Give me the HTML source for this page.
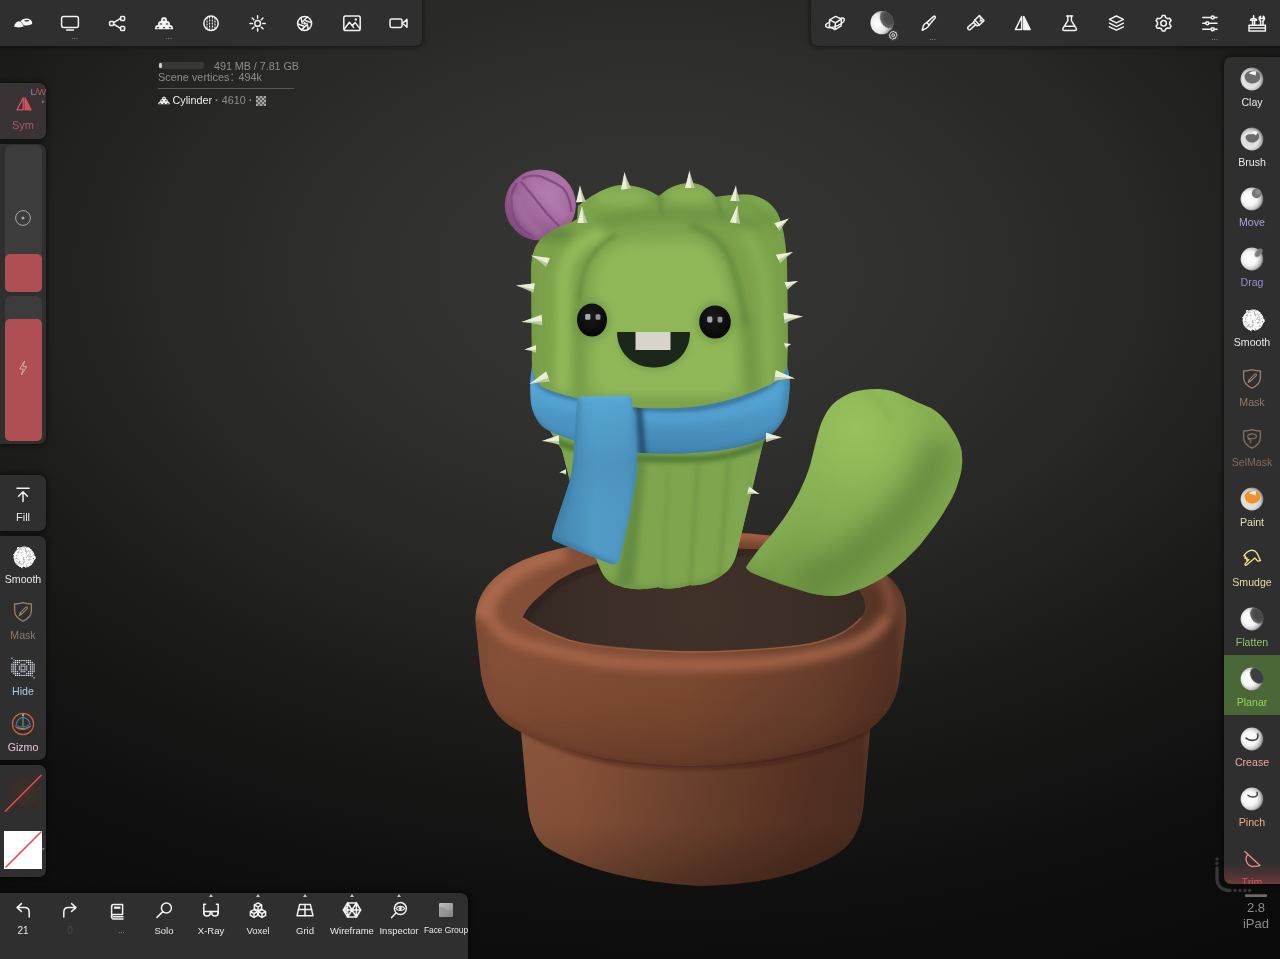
<!DOCTYPE html>
<html lang="en">
<head>
<meta charset="utf-8">
<title>Nomad Sculpt</title>
<style>
*{box-sizing:border-box;margin:0;padding:0}
html,body{width:1280px;height:959px;overflow:hidden;background:#1c1c1c}
body{position:relative;will-change:transform;font-family:"Liberation Sans","DejaVu Sans",sans-serif;color:#e8e8e8;font-size:11px}
#scene{position:absolute;left:0;top:0;width:1280px;height:959px;display:block}
.panel{position:absolute;background:#302f30;box-shadow:0 0 5px 1px rgba(0,0,0,.55)}
.tl{left:0;top:0;width:421.5px;height:46.4px;border-radius:0 0 7px 0}
.tr{left:811px;top:0;width:469px;height:46.4px;border-radius:0 0 0 7px}
.bb{left:0;top:893px;width:468px;height:66px;border-radius:0 8px 0 0}
.rs{left:1224px;top:57px;width:56px;height:827px;border-radius:7px 0 0 7px;overflow:hidden}
.lp{left:0;width:46px;border-radius:0 7px 7px 0}
.ic{position:absolute;width:47px;height:46px;top:0}
.ic svg{position:absolute;left:50%;top:50%;transform:translate(-50%,-50%);overflow:visible}
.dots{position:absolute;left:0;width:100%;text-align:center;font-size:7px;line-height:7px;letter-spacing:.3px;color:#9a9a9a}
.lbl{position:absolute;left:-10px;right:-10px;text-align:center;font-size:11px;line-height:13px;white-space:nowrap}
.tool{position:absolute;left:0;width:100%;height:60px}
.tool svg{position:absolute;left:27.8px;top:23.5px;transform:translate(-50%,-50%);overflow:visible}
.tool .lbl{top:41px;font-size:10.6px}
.ltool{position:absolute;left:0;width:46px;height:56px}
.ltool svg{position:absolute;left:23.3px;top:20.3px;transform:translate(-50%,-50%);overflow:visible}
.ltool .lbl{top:37.5px;font-size:10.6px}
.bi{position:absolute;top:0;width:47px;height:66px}
.bi svg{position:absolute;left:50%;top:17px;transform:translate(-50%,-50%);overflow:visible}
.bi .lbl{top:31px;font-size:9.5px}
.tri{position:absolute;left:50%;top:1px;margin-left:-2.5px;width:0;height:0;border-left:2.5px solid transparent;border-right:2.5px solid transparent;border-bottom:3px solid #c8c8c8}
svg .s{fill:none;stroke:#f2f2f2;stroke-width:1.5;stroke-linecap:round;stroke-linejoin:round}
</style>
</head>
<body>
<svg id="scene" viewBox="0 0 1280 959" width="1280" height="959">
<defs>
<radialGradient id="bg" gradientUnits="userSpaceOnUse" cx="650" cy="270" r="1300" gradientTransform="translate(0 97.2) scale(1 .64)">
<stop offset="0" stop-color="#363634"/><stop offset=".19" stop-color="#31312f"/><stop offset=".385" stop-color="#272726"/><stop offset=".577" stop-color="#191918"/><stop offset=".77" stop-color="#0f0f0f"/><stop offset="1" stop-color="#090909"/>
</radialGradient>
<filter id="b2" filterUnits="userSpaceOnUse" x="400" y="120" width="620" height="800"><feGaussianBlur stdDeviation="2"/></filter>
<filter id="b3" filterUnits="userSpaceOnUse" x="400" y="120" width="620" height="800"><feGaussianBlur stdDeviation="3"/></filter>
<filter id="b5" filterUnits="userSpaceOnUse" x="400" y="120" width="620" height="800"><feGaussianBlur stdDeviation="5"/></filter>
<filter id="b8" filterUnits="userSpaceOnUse" x="400" y="120" width="620" height="800"><feGaussianBlur stdDeviation="8"/></filter>
<filter id="b12" filterUnits="userSpaceOnUse" x="400" y="120" width="620" height="800"><feGaussianBlur stdDeviation="12"/></filter>
<filter id="b20" filterUnits="userSpaceOnUse" x="400" y="120" width="620" height="800"><feGaussianBlur stdDeviation="20"/></filter>
<filter id="b05" filterUnits="userSpaceOnUse" x="400" y="120" width="620" height="800"><feGaussianBlur stdDeviation=".45"/></filter>
<filter id="b1" filterUnits="userSpaceOnUse" x="400" y="120" width="620" height="800"><feGaussianBlur stdDeviation=".7"/></filter>
<filter id="gainPot" filterUnits="userSpaceOnUse" x="400" y="120" width="620" height="800" color-interpolation-filters="sRGB"><feComponentTransfer><feFuncR type="linear" slope="1.13"/><feFuncG type="linear" slope="1.06"/><feFuncB type="linear" slope="1.02"/></feComponentTransfer></filter>
<filter id="gain" filterUnits="userSpaceOnUse" x="400" y="120" width="620" height="800" color-interpolation-filters="sRGB"><feComponentTransfer><feFuncR type="linear" slope="1.07"/><feFuncG type="linear" slope="1.07"/><feFuncB type="linear" slope="1.07"/></feComponentTransfer></filter>
</defs>
<rect width="1280" height="959" fill="url(#bg)"/>
<defs>
<!-- POT -->
<linearGradient id="potH" gradientUnits="userSpaceOnUse" x1="520" y1="0" x2="872" y2="0">
<stop offset="0" stop-color="#79503b"/><stop offset=".15" stop-color="#7a4e39"/><stop offset=".5" stop-color="#603e2d"/><stop offset=".82" stop-color="#4c2f22"/><stop offset=".97" stop-color="#452b20"/><stop offset="1" stop-color="#54362a"/>
</linearGradient>
<linearGradient id="potV" gradientUnits="userSpaceOnUse" x1="0" y1="730" x2="0" y2="886">
<stop offset="0" stop-color="#000" stop-opacity=".0"/><stop offset=".6" stop-color="#000" stop-opacity=".05"/><stop offset="1" stop-color="#000" stop-opacity=".28"/>
</linearGradient>
<linearGradient id="rimH" gradientUnits="userSpaceOnUse" x1="474" y1="0" x2="907" y2="0">
<stop offset="0" stop-color="#6f4633"/><stop offset=".06" stop-color="#774b36"/><stop offset=".5" stop-color="#704631"/><stop offset=".8" stop-color="#5d3b2b"/><stop offset=".97" stop-color="#4a2e22"/><stop offset="1" stop-color="#5e3d2e"/>
</linearGradient>
<linearGradient id="rimV" gradientUnits="userSpaceOnUse" x1="0" y1="660" x2="0" y2="766">
<stop offset="0" stop-color="#000" stop-opacity="0"/><stop offset=".5" stop-color="#000" stop-opacity=".07"/><stop offset="1" stop-color="#000" stop-opacity=".2"/>
</linearGradient>
<radialGradient id="soilG" gradientUnits="userSpaceOnUse" cx="700" cy="610" r="190">
<stop offset="0" stop-color="#393029"/><stop offset=".6" stop-color="#352c27"/><stop offset="1" stop-color="#2c2521"/>
</radialGradient>
<clipPath id="cpPot"><path id="pPot" d="M520,720 L528,809 Q532,836 546,847 Q600,880 700,886 Q792,884 840,852 Q862,836 864,800 L871,720 Z"/></clipPath>
<clipPath id="cpRim"><path id="pRim" d="M475.500,622 C474,590 500,566 540,554 C600,536 680,530 740,533 C800,536 860,552 890,578 C905,592 907,608 906,625 L899,682 C895,704 886,716 870,729 C840,746 770,765 690,766 C610,765 540,745 510,726 C494,714 486,700 481,675 Z"/></clipPath>
<clipPath id="cpSoil"><path id="pSoil" d="M522.500,617.500 C527,608 533,602 540,596 C546,590 552,585 557.500,581 C564,577 570,574 576,571 C590,565 612,559 640,555 C680,549.500 720,548 750,549 C790,550.500 830,562 850,580 C860,590 866.500,600 865,609 C864,613 862,616 860,618 C853,626 848,630 841,633 C830,638 820,641 810,643 C790,646.500 775,648 760,649 C740,650.500 710,651.500 690,651 C670,651 650,650.500 630,649 C615,648 605,647 595,645.500 C585,644 577,642 570,640 C560,637 552,634 545,630.500 C535,626 527,622 522.500,617.500 Z"/></clipPath>
</defs>
<g id="pot" filter="url(#gainPot)">
<use href="#pPot" fill="url(#potH)"/>
<use href="#pPot" fill="url(#potV)"/>
<g clip-path="url(#cpPot)">
<path d="M500,712 Q540,745 610,760 Q690,771 775,759 Q850,744 885,716" fill="none" stroke="#2e190f" stroke-opacity=".55" stroke-width="7" filter="url(#b2)"/>
</g>
<use href="#pRim" fill="url(#rimH)"/>
<use href="#pRim" fill="url(#rimV)"/>
<g clip-path="url(#cpRim)">
<!-- torus top highlight: front arc -->
<path d="M481,618 C486,600 496,586 512,574 C530,562 548,556 566,551" fill="none" stroke="#9a654c" stroke-opacity=".9" stroke-width="18" filter="url(#b5)"/>
<path d="M486,606 C490,622 498,632 507,637 C520,644 532,646 545,649 C560,653 578,657 595,660 C625,664 660,665 690,665 C720,665 750,664 780,661 C810,657 835,651 850,646 C868,640 880,630 888,616" fill="none" stroke="#98644b" stroke-opacity=".9" stroke-width="11" filter="url(#b5)"/>
<path d="M860,560 C880,570 894,590 890,616" fill="none" stroke="#80543f" stroke-opacity=".7" stroke-width="12" filter="url(#b5)"/>
<!-- back rim top (lit) -->
<path d="M600,540 C680,530 760,530 830,548" fill="none" stroke="#9a5c42" stroke-opacity=".8" stroke-width="12" filter="url(#b3)"/>
<!-- bottom edge darkening -->
<path d="M490,718 Q540,754 610,770 Q690,780 775,768 Q850,752 885,724" fill="none" stroke="#3a2015" stroke-opacity=".45" stroke-width="12" filter="url(#b5)"/>
</g>
<!-- soil -->
<use href="#pSoil" fill="url(#soilG)"/>
<g clip-path="url(#cpSoil)">
<path d="M522,617 C527,608 540,594 557,581 C570,573 600,560 640,555 C700,547 760,548 790,553" fill="none" stroke="#1f1815" stroke-opacity=".55" stroke-width="8" filter="url(#b3)"/>
</g>
<!-- thin light lip along front inner edge -->
<path d="M523,618 C535,627 552,634.500 570,640.500 C590,646 630,650 690,652 C740,652 790,647.500 810,644 C835,639 852,628 861,618" fill="none" stroke="#a06a50" stroke-opacity=".55" stroke-width="1.600" filter="url(#b1)"/>
</g>
<defs>
<clipPath id="cpBody"><path id="pBody" d="M531,272 C531,256 534,247 540,240 C548,232 560,226 572,222 L577,219 L578,206 C588,198 605,186 622,185 C640,185 652,192 659,196 C668,188 678,183 690,183 C702,183 710,190 716,197 C726,195 740,194 752,195 C765,198 773,205 778,214 C784,228 786,245 787,262 L788,340 L787,372 C785,400 775,425 763,443 L752,490 L738,548 C735,562 730,570 722,575 C712,583 700,586 690,585 C680,588 668,590 658,587 C645,590 630,590 620,586 C610,584 604,578 600,568 L580,520 L562,450 C545,425 534,400 532,372 Z"/></clipPath>
<radialGradient id="eyeG" cx=".45" cy=".35" r=".65"><stop offset="0" stop-color="#1a1a1a"/><stop offset="1" stop-color="#070707"/></radialGradient>
<radialGradient id="flG" gradientUnits="userSpaceOnUse" cx="552" cy="192" r="56">
<stop offset="0" stop-color="#b27bae"/><stop offset=".5" stop-color="#a4699e"/><stop offset="1" stop-color="#7d4679"/>
</radialGradient>
<clipPath id="cpFl"><circle cx="540.300" cy="205" r="35.600"/></clipPath>
</defs>
<!-- flower -->
<g id="flower">
<circle cx="540.300" cy="205" r="35.600" fill="url(#flG)"/>
<g clip-path="url(#cpFl)" fill="none" stroke="#7c437a" stroke-opacity=".8" stroke-width="2.400" filter="url(#b1)">
<path d="M521,181.500 C530,192 540,205 546,212.500 C551,218 555,222 559,226"/>
<path d="M522,179 C530,174 540,175 546,178.700 C554,182 560,186 563,188 C568,194 570.500,202 571.500,212"/>
<path d="M517,183.400 C512,190 511,197 511.500,200 C511.500,206 512,210 512.500,212.500 C514,220 518,225 521,227.500 C525,232 529,234 534,237"/>
</g>
<g clip-path="url(#cpFl)" fill="none" stroke="#b985b4" stroke-opacity=".45" stroke-width="7" filter="url(#b3)">
<path d="M530,180 C542,190 554,204 566,218"/>
<path d="M516,196 C518,212 528,226 542,236"/>
</g>
</g>
<g id="cactus">
<use href="#pBody" fill="#7ca24a"/>
<g clip-path="url(#cpBody)">
<!-- back lobes -->
<ellipse cx="622" cy="197" rx="28" ry="9" fill="#8ab255" filter="url(#b5)"/>
<ellipse cx="690" cy="195" rx="24" ry="9" fill="#8ab255" filter="url(#b5)"/>
<ellipse cx="752" cy="206" rx="20" ry="8" fill="#84ac50" filter="url(#b5)"/>
<path d="M659,194 L662,216 M716,195 L722,218" fill="none" stroke="#5a853a" stroke-width="4" stroke-opacity=".7" filter="url(#b2)"/>
<path d="M730,205 C750,202 768,212 778,232" fill="none" stroke="#6a9341" stroke-width="10" stroke-opacity=".7" filter="url(#b5)"/>
<!-- valley -->
<path d="M596,224 C620,216 660,214 700,215 C725,216 745,220 762,226" fill="none" stroke="#678f40" stroke-width="11" stroke-opacity=".7" filter="url(#b5)"/>
<!-- face -->
<path d="M592,300 C590,262 602,245 630,241 L690,239 C712,241 724,262 730,292 L740,340 L742,392 L588,392 Z" fill="#90b759" filter="url(#b8)"/>
<path d="M604,300 C603,270 612,254 634,251 L688,250 C706,252 715,270 720,296 L729,340 L730,392 L602,392 Z" fill="#90b759" filter="url(#b5)"/>
<!-- left lobe highlight + arch -->
<path d="M563,392 L564,278 C565,256 578,241 604,233" fill="none" stroke="#93bb5b" stroke-width="15" stroke-opacity=".95" filter="url(#b5)"/>
<!-- right lobe highlight -->
<path d="M769,392 L766,300 C765,275 760,252 744,233" fill="none" stroke="#88b053" stroke-width="11" stroke-opacity=".9" filter="url(#b5)"/>
<!-- creases -->
<path d="M580,392 L579,292" fill="none" stroke="#6b9443" stroke-width="7" stroke-opacity=".55" filter="url(#b5)"/>
<path d="M616,235 C601,243 591,255 586,267 C582,277 580,287 579,300" fill="none" stroke="#58833a" stroke-width="3.200" stroke-opacity=".8" filter="url(#b2)"/>
<path d="M752,392 L749,345 L745,315" fill="none" stroke="#648d3f" stroke-width="9" stroke-opacity=".65" filter="url(#b5)"/>
<path d="M690,226 C703,229 716,236 725,250 C731,260 735,272 738,285 C741,297 744,310 746,325" fill="none" stroke="#55803a" stroke-width="5" stroke-opacity=".8" filter="url(#b3)"/>
<!-- edges -->
<path d="M529,262 L529,392" fill="none" stroke="#6a9341" stroke-width="9" stroke-opacity=".6" filter="url(#b5)"/>
<path d="M791,215 L791,392" fill="none" stroke="#678f3f" stroke-width="9" stroke-opacity=".65" filter="url(#b5)"/>
<!-- flower shadow -->
<ellipse cx="554" cy="234" rx="20" ry="8" fill="#557f38" fill-opacity=".6" filter="url(#b5)"/>
<!-- eye AO -->
<ellipse cx="592" cy="320" rx="19" ry="21" fill="#6a9342" fill-opacity=".55" filter="url(#b3)"/>
<ellipse cx="715" cy="322" rx="20" ry="21" fill="#6a9342" fill-opacity=".55" filter="url(#b3)"/>
<path d="M617,336 L690,336 C690,356 676,371 654,371 C632,371 617,356 617,336 Z" fill="#6a9342" fill-opacity=".5" filter="url(#b3)"/>
<!-- lower body -->
<path d="M540,430 L800,430 L760,600 L580,600 Z" fill="#7fa54e"/>
<path d="M555,441 C590,456 640,461 700,459 C730,457 750,451 768,441" fill="none" stroke="#44702f" stroke-width="7" stroke-opacity=".75" filter="url(#b2)"/>
<path d="M637,455 L646,457 L634,585 L616,585 Z" fill="#5a823c" fill-opacity=".7" filter="url(#b3)"/>
<path d="M698,462 L690,588 M729,456 L719,580" fill="none" stroke="#6c9143" stroke-width="4" stroke-opacity=".7" filter="url(#b2)"/>
<path d="M668,470 L664,590" fill="none" stroke="#729846" stroke-width="4" stroke-opacity=".6" filter="url(#b2)"/>
<path d="M745,460 L730,575" fill="none" stroke="#82a850" stroke-width="7" stroke-opacity=".6" filter="url(#b3)"/>
<path d="M600,580 Q660,602 728,576" fill="none" stroke="#587f39" stroke-width="6" stroke-opacity=".5" filter="url(#b3)"/>
</g>
<!-- eyes -->
<ellipse cx="592" cy="320" rx="15" ry="16.600" fill="url(#eyeG)"/>
<ellipse cx="715" cy="322" rx="15.800" ry="16.600" fill="url(#eyeG)"/>
<g fill="#a4aab2" filter="url(#b1)"><rect x="585.200" y="314" width="5.200" height="5.800" rx="1.400"/><rect x="595.600" y="314.200" width="4.800" height="5.600" rx="1.400" fill-opacity=".85"/><rect x="707.200" y="316.600" width="5.200" height="5.800" rx="1.400"/><rect x="717.600" y="316.800" width="4.800" height="5.600" rx="1.400" fill-opacity=".85"/></g>
<!-- mouth -->
<path d="M617,332 L690,332 C690,352 676,367.500 654,367.500 C632,367.500 617,352 617,332 Z" fill="#1c271b"/>
<rect x="635.500" y="332" width="35" height="18" fill="#d6d4cb"/>
</g>
<defs>
<clipPath id="cpArm"><path id="pArm" d="M746,567 C752,558 758,550 765,542 C776,530 786,516 793,504 C802,488 807,476 811,462 C814,450 816,440 819,430 C822,420 826,412 832,405 C838,399 845,395 853,392 C861,390 868,389 876,389 C886,389 894,391 902,395 C912,400 922,404 931,408 C941,414 948,422 953,431 C959,441 962,448 962,456 C963,466 961,474 958,483 C955,494 950,502 944,512 C938,522 930,532 920,545 C911,555 901,564 890,573 C879,581 867,587 855,591 C848,594 841,596 835,596 C823,596 811,594 800,590 C787,586 774,582 762,577 C754,574 747,571 746,567 Z"/></clipPath>
<radialGradient id="armG" gradientUnits="userSpaceOnUse" cx="856" cy="428" r="175">
<stop offset="0" stop-color="#98c25d"/><stop offset=".3" stop-color="#8db657"/><stop offset=".65" stop-color="#80a84e"/><stop offset="1" stop-color="#769d48"/>
</radialGradient>
<clipPath id="cpRing"><path id="pRing" d="M532,366 C533,376 536,382 542,387 C560,396 600,404 640,408 C665,409 685,408 700,406 C725,402 750,394 770,385 C780,380 785,374 787,366 C790,375 790,385 789,396 C788,408 787,414 783,420 C778,430 770,436 762,440 C745,447 720,451 700,452.500 C680,454 660,454 640,453 C615,451 590,446 572,440 C555,434 545,430 540,424 C534,416 531,408 530.500,398 C530,388 530,376 532,366 Z"/></clipPath>
<linearGradient id="ringG" gradientUnits="userSpaceOnUse" x1="0" y1="366" x2="0" y2="454">
<stop offset="0" stop-color="#4b95c3"/><stop offset=".4" stop-color="#4a92be"/><stop offset=".75" stop-color="#4587b2"/><stop offset="1" stop-color="#3c7ca6"/>
</linearGradient>
<clipPath id="cpTail"><path id="pTail" d="M577,402 C577,398 579,396.500 583,396.500 L626,395.500 C630,395.500 632,397 632,401 C633,420 636,440 637,455 C638,470 635,485 632.500,500 C629,520 624,540 620,558 C619,563 616,565.500 611,564 C592,557 573,549 556,541.500 C552,540 551.500,538 552.500,534 C558,515 565,497 570,480 C574,462 575,440 575.500,420 Z"/></clipPath>
<linearGradient id="tailV" gradientUnits="userSpaceOnUse" x1="0" y1="396" x2="0" y2="565"><stop offset="0" stop-color="#58a8d6" stop-opacity=".55"/><stop offset=".2" stop-color="#4f9bc8" stop-opacity=".25"/><stop offset=".4" stop-color="#3f7da5" stop-opacity=".25"/><stop offset=".7" stop-color="#4a90bb" stop-opacity=".2"/><stop offset="1" stop-color="#4a90bb" stop-opacity=".1"/></linearGradient>
<linearGradient id="tailG" gradientUnits="userSpaceOnUse" x1="565" y1="0" x2="640" y2="0">
<stop offset="0" stop-color="#437fa5"/><stop offset=".4" stop-color="#4c91ba"/><stop offset=".8" stop-color="#4b8eb7"/><stop offset="1" stop-color="#4585ac"/>
</linearGradient>
</defs>
<g id="scarf" filter="url(#gain)">
<use href="#pRing" fill="url(#ringG)"/>
<g clip-path="url(#cpRing)">
<path d="M528,378 C534,394 545,398 560,402 C600,414 650,419 700,416 C740,412 770,400 792,382" fill="none" stroke="#55a0cf" stroke-width="10" stroke-opacity=".6" filter="url(#b5)"/>
<path d="M528,414 C540,434 555,440 572,446 C600,454 650,460 700,458 C740,454 775,444 792,414" fill="none" stroke="#2f5f80" stroke-width="8" stroke-opacity=".8" filter="url(#b3)"/>
<path d="M534,366 C536,380 540,386 548,390 C580,402 640,412 700,408 C740,402 775,388 787,366" fill="none" stroke="#2d5b7a" stroke-width="4" stroke-opacity=".85" filter="url(#b2)"/>
<path d="M638,398 L643,456" fill="none" stroke="#1f425a" stroke-width="7" stroke-opacity=".85" filter="url(#b2)"/>
<path d="M790,370 L786,425" fill="none" stroke="#376f94" stroke-width="8" stroke-opacity=".7" filter="url(#b3)"/>
</g>
<use href="#pTail" fill="url(#tailG)"/>
<use href="#pTail" fill="url(#tailV)"/>
<g clip-path="url(#cpTail)">
<path d="M577,396 L574,440 C572,470 566,500 552,540" fill="none" stroke="#356d91" stroke-width="6" stroke-opacity=".7" filter="url(#b3)"/>
<path d="M633,396 C637,440 641,470 633,505 L621,562" fill="none" stroke="#3a7498" stroke-width="4" stroke-opacity=".6" filter="url(#b2)"/>
<path d="M552,539 L616,567" fill="none" stroke="#336a8e" stroke-width="6" stroke-opacity=".7" filter="url(#b2)"/>
<path d="M580,397 L628,396" fill="none" stroke="#5aa2cd" stroke-width="5" stroke-opacity=".7" filter="url(#b2)"/>
</g>
</g>
<g id="arm">
<use href="#pArm" fill="url(#armG)"/>
<g clip-path="url(#cpArm)">
<path d="M940,440 C935,480 900,520 860,552 C840,568 815,580 795,585" fill="none" stroke="#5c8038" stroke-width="34" stroke-opacity=".7" filter="url(#b12)"/>
<path d="M744,570 C770,586 800,596 836,601" fill="none" stroke="#648a3c" stroke-width="8" stroke-opacity=".6" filter="url(#b5)"/>
<path d="M812,470 C800,505 775,535 750,565" fill="none" stroke="#8ab355" stroke-width="14" stroke-opacity=".6" filter="url(#b8)"/>
<path d="M866,392 C880,398 888,410 890,422 M905,396 C925,408 940,425 945,445" fill="none" stroke="#7ea64c" stroke-width="4" stroke-opacity=".6" filter="url(#b3)"/>
</g>
</g>
<g id="spikes" filter="url(#b05)">
<path d="M631.0,188.6 Q627.1,180.3 624.5,172.0 Q623.4,180.7 621.0,189.4 Z" fill="#bcc7a4"/>
<path d="M621.0,189.4 L624.5,172.0 L627.2,188.9 Z" fill="#e9efd9"/>
<path d="M695.0,187.9 Q691.6,179.2 689.5,170.5 Q687.9,179.3 685.0,188.1 Z" fill="#bcc7a4"/>
<path d="M685.0,188.1 L689.5,170.5 L691.2,188.0 Z" fill="#e9efd9"/>
<path d="M739.8,201.3 Q737.3,193.4 736.0,185.5 Q733.7,193.1 730.2,200.7 Z" fill="#bcc7a4"/>
<path d="M730.2,200.7 L736.0,185.5 L736.2,201.1 Z" fill="#e9efd9"/>
<path d="M585.8,201.7 Q582.3,193.6 580.0,185.5 Q578.7,193.9 576.2,202.3 Z" fill="#bcc7a4"/>
<path d="M576.2,202.3 L580.0,185.5 L582.2,201.9 Z" fill="#e9efd9"/>
<path d="M587.5,222.9 Q584.1,214.4 582.0,206.0 Q580.4,214.6 577.5,223.1 Z" fill="#bcc7a4"/>
<path d="M577.5,223.1 L582.0,206.0 L583.7,223.0 Z" fill="#e9efd9"/>
<path d="M740.0,223.7 Q738.1,214.3 737.5,205.0 Q734.4,213.7 730.0,222.3 Z" fill="#bcc7a4"/>
<path d="M730.0,222.3 L737.5,205.0 L736.2,223.2 Z" fill="#e9efd9"/>
<path d="M779.6,230.7 Q784.0,224.1 789.0,218.5 Q782.0,221.4 774.4,223.3 Z" fill="#bcc7a4"/>
<path d="M774.4,223.3 L789.0,218.5 L777.7,227.9 Z" fill="#e9efd9"/>
<path d="M780.0,263.3 Q786.3,257.1 793.0,252.0 Q784.7,253.9 776.0,254.7 Z" fill="#bcc7a4"/>
<path d="M776.0,254.7 L793.0,252.0 L778.5,260.1 Z" fill="#e9efd9"/>
<path d="M787.5,289.7 Q792.5,284.8 798.0,281.0 Q791.5,282.2 784.5,282.3 Z" fill="#bcc7a4"/>
<path d="M784.5,282.3 L798.0,281.0 L786.4,286.9 Z" fill="#e9efd9"/>
<path d="M784.4,323.2 Q793.7,319.2 803.0,316.5 Q793.3,315.3 783.6,312.8 Z" fill="#bcc7a4"/>
<path d="M783.6,312.8 L803.0,316.5 L784.1,319.3 Z" fill="#e9efd9"/>
<path d="M785.9,348.8 Q788.3,345.9 791.0,344.0 Q787.7,344.1 784.1,343.2 Z" fill="#bcc7a4"/>
<path d="M784.1,343.2 L791.0,344.0 L785.2,346.7 Z" fill="#e9efd9"/>
<path d="M774.2,380.8 Q784.7,379.1 795.0,378.5 Q785.3,374.9 775.8,370.2 Z" fill="#bcc7a4"/>
<path d="M775.8,370.2 L795.0,378.5 L774.8,376.8 Z" fill="#e9efd9"/>
<path d="M549.8,258.1 Q540.2,257.3 531.0,255.5 Q538.8,260.7 546.2,266.9 Z" fill="#bcc7a4"/>
<path d="M549.8,258.1 L531.0,255.5 L547.5,263.6 Z" fill="#e9efd9"/>
<path d="M534.7,283.2 Q525.2,285.0 516.0,285.5 Q524.8,288.5 533.3,292.8 Z" fill="#bcc7a4"/>
<path d="M534.7,283.2 L516.0,285.5 L533.8,289.2 Z" fill="#e9efd9"/>
<path d="M541.5,314.8 Q531.6,319.0 521.5,322.0 Q531.9,323.0 542.5,325.2 Z" fill="#bcc7a4"/>
<path d="M541.5,314.8 L521.5,322.0 L542.1,321.3 Z" fill="#e9efd9"/>
<path d="M535.8,345.2 Q530.2,348.0 524.5,349.5 Q530.3,350.5 536.2,352.8 Z" fill="#bcc7a4"/>
<path d="M535.8,345.2 L524.5,349.5 L536.0,349.9 Z" fill="#e9efd9"/>
<path d="M546.0,371.5 Q538.0,378.3 529.5,384.0 Q539.5,382.2 550.0,381.5 Z" fill="#bcc7a4"/>
<path d="M546.0,371.5 L529.5,384.0 L548.5,377.8 Z" fill="#e9efd9"/>
<path d="M558.7,435.2 Q550.4,438.7 542.0,441.0 Q550.6,442.3 559.3,444.8 Z" fill="#bcc7a4"/>
<path d="M558.7,435.2 L542.0,441.0 L559.1,441.2 Z" fill="#e9efd9"/>
<path d="M565.8,469.2 Q562.7,471.5 559.5,472.5 Q562.8,473.0 566.2,474.8 Z" fill="#bcc7a4"/>
<path d="M565.8,469.2 L559.5,472.5 L566.1,472.7 Z" fill="#e9efd9"/>
<path d="M766.0,442.3 Q774.0,439.3 782.0,437.5 Q774.0,435.7 766.0,432.7 Z" fill="#bcc7a4"/>
<path d="M766.0,432.7 L782.0,437.5 L766.0,438.7 Z" fill="#e9efd9"/>
<path d="M746.8,494.3 Q753.3,493.6 759.5,494.0 Q754.2,490.9 749.2,486.7 Z" fill="#bcc7a4"/>
<path d="M749.2,486.7 L759.5,494.0 L747.7,491.5 Z" fill="#e9efd9"/>
</g>

</svg>

<div class="panel tl">
<div class="ic" style="left:-0.5px"><svg width="30" height="30" viewBox="-15 -15 30 30"><path d="M-9,3.600 C-8.300,.4 -6.300,-1.800 -4.300,-1.800 C-2,-1.800 -.2,1 .6,3.600 C-2,4.700 -7,4.700 -9,3.600 Z" fill="#f4f4f4"/><path d="M-2.600,-1.600 C-1.600,-3.600 1,-4.600 3.600,-4.600 C6.600,-4.600 9,-2.800 9.300,-.2 C9.300,1.600 6,2.500 3,2.500 C2,2.500 1.200,2.400 .6,2.200 C0,.6 -1.200,-.9 -2.600,-1.600 Z" fill="#f4f4f4"/><ellipse cx="3.800" cy="-2.300" rx="2.600" ry=".8" fill="#302f30"/></svg></div>
<div class="ic" style="left:46.5px"><svg width="30" height="30" viewBox="-15 -15 30 30"><rect class="s" x="-8.400" y="-6.600" width="16.800" height="11.200" rx="2"/><path class="s" d="M-3.400,7 H3.400"/></svg><div class="dots" style="top:33px;left:5px;color:#c0c0c0">...</div></div>
<div class="ic" style="left:93.5px"><svg width="30" height="30" viewBox="-15 -15 30 30"><rect class="s" x="-7.400" y="-1.600" width="4" height="4" rx=".8"/><rect class="s" x="3.600" y="-6.600" width="4" height="4" rx=".8"/><rect class="s" x="3.600" y="3.400" width="4" height="4" rx=".8"/><path class="s" d="M-3.400,-.4 L3.600,-4.600 M-3.400,1.200 L3.600,5.400"/></svg></div>
<div class="ic" style="left:140.5px"><svg width="30" height="30" viewBox="-15 -15 30 30"><path d="M-9.200,6.300 L-8.600,3.600 Q-8.200,2.300 -6.800,2.300 L-6.200,2.300 L-5.600,-.4 Q-5.200,-1.700 -3.800,-1.700 L-3.200,-1.700 L-2.600,-4.400 Q-2.200,-5.700 -.8,-5.700 L.8,-5.700 Q2.200,-5.700 2.600,-4.400 L3.200,-1.700 L3.800,-1.700 Q5.200,-1.700 5.600,-.4 L6.200,2.300 L6.800,2.300 Q8.200,2.300 8.600,3.600 L9.200,6.300 Z" fill="#f4f4f4"/><g fill="#302f30"><path d="M-1.400,-2.600 Q-1.200,-3.800 0,-3.800 Q1.200,-3.800 1.400,-2.600 Z"/><path d="M-4.400,1.400 Q-4.200,.2 -3,.2 Q-1.800,.2 -1.600,1.400 Z"/><path d="M1.600,1.400 Q1.800,.2 3,.2 Q4.200,.2 4.400,1.400 Z"/><path d="M-7.400,5.200 Q-7.200,4 -6,4 Q-4.800,4 -4.600,5.200 Z"/><path d="M-1.400,5.200 Q-1.200,4 0,4 Q1.200,4 1.400,5.200 Z"/><path d="M4.600,5.200 Q4.800,4 6,4 Q7.200,4 7.400,5.200 Z"/></g></svg><div class="dots" style="top:33px;left:5px;color:#c0c0c0">...</div></div>
<div class="ic" style="left:187.5px"><svg width="30" height="30" viewBox="-15 -15 30 30"><circle class="s" cx="0" cy=".3" r="7.200"/><g stroke="#f2f2f2" stroke-width="1.100" fill="none" stroke-dasharray="2 1"><path d="M-4,-5.400 V6 M-1.400,-6.600 V7.200 M1.400,-6.600 V7.200 M4,-5.400 V6"/></g></svg></div>
<div class="ic" style="left:234.5px"><svg width="30" height="30" viewBox="-15 -15 30 30"><circle class="s" cx="-.4" cy=".4" r="2.900"/><path class="s" d="M-.4,-4.800 V-7.200 M-.4,5.600 V8 M-5.600,.4 H-8 M4.800,.4 H7.200 M-4.100,-3.300 L-5.800,-5 M3.300,-3.300 L5,-5 M-4.100,4.100 L-5.800,5.800 M3.300,4.100 L5,5.800" stroke-width="1.400"/></svg></div>
<div class="ic" style="left:281.5px"><svg width="30" height="30" viewBox="-15 -15 30 30"><circle class="s" cx="-.4" cy=".4" r="7"/><g class="s" stroke-width="1.300"><path d="M-1.800,-1.800 L2.400,-6.200 M.8,-2.200 L6.400,-.4 M2,.6 L3.200,6.200 M1,2.600 L-3.400,6.600 M-1.600,3 L-7.200,1 M-2.800,.2 L-4,-5.400"/></g><circle cx="-.4" cy=".4" r="1.300" fill="#f2f2f2"/></svg></div>
<div class="ic" style="left:328.5px"><svg width="30" height="30" viewBox="-15 -15 30 30"><rect class="s" x="-8.200" y="-7" width="16.400" height="14.600" rx="1.800"/><path class="s" d="M-7.600,6 L-2.600,-.8 L1.600,4.400 M.2,2.600 L3.200,-.4 L7.800,5.400" stroke-width="1.400"/><circle cx="3.800" cy="-3.600" r="1.200" fill="#f2f2f2"/></svg></div>
<div class="ic" style="left:375.5px"><svg width="30" height="30" viewBox="-15 -15 30 30"><rect class="s" x="-9" y="-4" width="12" height="8.400" rx="1.600"/><path class="s" d="M3.600,.2 L8,-3.600 V4.200 Z" stroke-width="1.300"/></svg></div>
</div>

<div class="panel tr">
<div class="ic" style="left:0.5px"><svg width="30" height="30" viewBox="-15 -15 30 30"><g class="s" stroke-width="1.300"><path d="M-5.400,-3.200 L.6,-6.600 L6.400,-4 L6.200,2.800 L0,6.600 L-5.600,3.600 Z"/><path d="M-5.400,-3.200 L.4,-.2 L6.400,-4 M.4,-.2 L0,6.600"/><path d="M-5.800,-.6 C-9.400,.8 -10.200,2.600 -8.600,3.800 C-6.400,5.200 -1.400,4.400 3.200,2.400 C7.800,.2 10.200,-2.600 9.200,-4.200 C8.600,-5 7.400,-5.200 6.400,-5"/></g></svg></div>
<div class="ic" style="left:47.500px"><svg width="34" height="34" viewBox="-17 -17 34 34"><defs><radialGradient id="mc1" cx=".3" cy=".55" r=".75"><stop offset="0" stop-color="#ffffff"/><stop offset=".55" stop-color="#e6e6e6"/><stop offset=".85" stop-color="#8d8d8d"/><stop offset="1" stop-color="#5a5a5a"/></radialGradient><clipPath id="mcc"><circle cx="0" cy="-.3" r="11.600"/></clipPath><filter id="mcb"><feGaussianBlur stdDeviation=".6"/></filter></defs><circle cx="0" cy="-.3" r="11.600" fill="url(#mc1)"/><g clip-path="url(#mcc)"><ellipse cx="5.200" cy="-3.600" rx="6.600" ry="9.400" transform="rotate(-28 5.200 -3.600)" fill="#5c5c5c" filter="url(#mcb)"/><ellipse cx="6.400" cy="-4.400" rx="4.600" ry="7" transform="rotate(-28 6.400 -4.400)" fill="#4c4c4c" filter="url(#mcb)"/></g><circle cx="11.200" cy="12.200" r="6" fill="#3c3b3c"/><g transform="translate(11.200 12.200)" fill="none" stroke="#e8e8e8" stroke-width="1"><path d="M0,-3.900 L1.300,-3.100 L2.900,-2.700 L3.100,-1.100 L3.700,.3 L2.700,1.600 L2.300,3.100 L.8,3.400 L-.6,3.900 L-1.900,3 L-3.300,2.300 L-3.300,.8 L-3.800,-.7 L-2.700,-1.900 L-2,-3.300 L-.5,-3.300 Z" stroke-linejoin="round"/><circle r="1.400"/></g></svg></div>
<div class="ic" style="left:94.500px"><svg width="30" height="30" viewBox="-15 -15 30 30"><g class="s" stroke-width="1.400"><path d="M-6.800,7.200 L-5.600,2.600 C-4.800,1.200 -3.600,.2 -2.200,-.4 L4.600,-6.600 C5.600,-7.400 6.800,-6.200 6.200,-5.200 L.2,2 C-.4,3.400 -1.400,4.600 -2.800,5.400 Z"/><path d="M-2.200,-.4 L.2,2"/></g></svg><div class="dots" style="top:33.500px;left:4px;color:#c0c0c0">...</div></div>
<div class="ic" style="left:141.500px"><svg width="30" height="30" viewBox="-15 -15 30 30"><g class="s" stroke-width="1.400"><path d="M-1.200,-3 L3.400,-7.400 L8,-2.400 L3.400,2 Z"/><path d="M-1.200,-3 L-2.400,-.6 L-.4,1.600 M3.400,2 L1.200,2.800 L-.4,1.600"/><path d="M-2.400,-.6 L-7.800,3.800 C-9.400,5.200 -7.400,7.600 -5.600,6.400 L-.4,1.600"/></g><path d="M3.600,-5.400 L5,-3.800 L4.200,-2 L6,-2.600 L6.400,-1" fill="none" stroke="#f2f2f2" stroke-width="1.200"/></svg></div>
<div class="ic" style="left:188.500px"><svg width="30" height="30" viewBox="-15 -15 30 30"><path d="M-1.300,-6.400 V6.600 H-7.600 Z" fill="none" stroke="#f2f2f2" stroke-width="1.500" stroke-linejoin="round"/><path d="M.8,-6.400 V6.600 H7.200 Z" fill="#f2f2f2" stroke="#f2f2f2" stroke-width="1.500" stroke-linejoin="round"/></svg></div>
<div class="ic" style="left:235.500px"><svg width="30" height="30" viewBox="-15 -15 30 30"><g class="s" stroke-width="1.400"><path d="M-3.400,-7 H2.600"/><path d="M-2.200,-7 V-2.400 L-7,5.400 C-7.600,6.600 -7,7.600 -5.800,7.600 H5 C6.200,7.600 6.800,6.600 6.200,5.400 L1.400,-2.400 V-7"/><path d="M-5,3.200 H4.200"/></g></svg></div>
<div class="ic" style="left:282.500px"><svg width="30" height="30" viewBox="-15 -15 30 30"><g class="s" stroke-width="1.400"><path d="M-.6,-7 L6.400,-3.600 L-.6,-.2 L-7.600,-3.600 Z"/><path d="M-7.600,.2 L-.6,3.600 L6.400,.2"/><path d="M-7.600,3.800 L-.6,7.200 L6.400,3.800"/></g></svg></div>
<div class="ic" style="left:329.500px"><svg width="30" height="30" viewBox="-15 -15 30 30"><g class="s" stroke-width="1.500"><path d="M-1.700,-7.500 H.9 L1.700,-5.400 L3.600,-4.300 L5.800,-4.700 L7.100,-2.500 L5.700,-.8 V1.400 L7.100,3.100 L5.800,5.300 L3.600,4.900 L1.700,6 L.9,8.100 H-1.700 L-2.500,6 L-4.400,4.900 L-6.600,5.300 L-7.900,3.100 L-6.500,1.400 V-.8 L-7.900,-2.500 L-6.600,-4.700 L-4.400,-4.300 L-2.500,-5.400 Z"/><circle cx="-.4" cy=".3" r="2.800"/></g></svg></div>
<div class="ic" style="left:376.500px"><svg width="30" height="30" viewBox="-15 -15 30 30"><g class="s" stroke-width="1.400"><path d="M-8.200,-5.500 H.2 M3.200,-5.500 H6 M-8.200,.3 H-5.200 M-2.200,.3 H6 M-8.200,6.300 H.2 M3.200,6.300 H6"/><circle cx="1.700" cy="-5.500" r="1.500"/><circle cx="-3.700" cy=".3" r="1.500"/><circle cx="1.700" cy="6.300" r="1.500"/></g></svg><div class="dots" style="top:33.500px;left:4px;color:#c0c0c0">...</div></div>
<div class="ic" style="left:423.500px"><svg width="30" height="30" viewBox="-15 -15 30 30"><g class="s" stroke-width="1.400"><path d="M-9,2.200 H7.400 V8 H-9 Z M-9,5.100 H7.400"/><path d="M-5.400,2.200 V-2.600 M-3.400,2.200 V-2.600"/><path d="M-7.400,-2.800 C-7.400,-5.200 -1.400,-5.200 -1.400,-2.800 Z"/><path d="M-4.400,-4.600 V-7.200"/><path d="M2.600,2.200 V-2 M5,2.200 V-2"/><path d="M2.600,-2 C.6,-3 .6,-6 2.400,-6.800 V-4.600 H5.200 V-6.800 C7,-6 7,-3 5,-2"/></g></svg></div>
</div>

<div class="panel bb">
<div class="bi" style="left:-.5px"><svg width="30" height="30" viewBox="-15 -15 30 30"><path class="s" d="M-1.600,-6.400 L-6,-2.400 L-1.600,1.400 M-6,-2.400 H1.600 C4.600,-2.400 6.200,-.6 6.200,2.200 V7" stroke-width="1.500"/></svg><div class="lbl" style="font-size:10px">21</div></div>
<div class="bi" style="left:46.500px"><svg width="30" height="30" viewBox="-15 -15 30 30"><path class="s" d="M1.600,-6.400 L6,-2.400 L1.600,1.400 M6,-2.400 H-1.600 C-4.600,-2.400 -6.200,-.6 -6.200,2.200 V7" stroke="#4e4d4e" stroke-width="1.500"/></svg><div class="lbl" style="font-size:10px;color:#4e4d4e">0</div></div>
<div class="bi" style="left:93.500px"><svg width="30" height="30" viewBox="-15 -15 30 30"><g class="s" stroke-width="1.300"><path d="M-5.400,-4 V6.600 C-5.400,8.200 -4.600,9 -3.400,9 H6"/><path d="M-5.400,6.600 C-5.400,5 -4.600,4.400 -3.400,4.400 H5.600 V-5.600 H-3.400 C-4.600,-5.600 -5.400,-5 -5.400,-3.600"/><path d="M-3.400,6.700 H6"/></g><rect x="-3" y="-3.400" width="6.400" height="2.200" fill="#f2f2f2"/></svg><div class="dots" style="top:34px;left:4.500px;color:#bbb">...</div></div>
<div class="bi" style="left:140.500px"><svg width="30" height="30" viewBox="-15 -15 30 30"><circle class="s" cx="2.400" cy="-2" r="5" stroke-width="1.400"/><path class="s" d="M-1.200,1.600 L-7,7.400" stroke-width="1.400"/></svg><div class="lbl">Solo</div></div>
<div class="bi" style="left:187.500px"><div class="tri"></div><svg width="30" height="30" viewBox="-15 -15 30 30"><g class="s" stroke-width="1.400"><path d="M-5.400,-5.800 H-7.200 V3.200 M5.400,-5.800 H7.200 V3.200"/><path d="M-7.200,1.400 H-.8 V3 C-.8,7 -7.200,7 -7.200,3 Z M7.200,1.400 H.8 V3 C.8,7 7.200,7 7.200,3 Z"/><path d="M-.8,1.600 H.8"/></g></svg><div class="lbl">X-Ray</div></div>
<div class="bi" style="left:234.500px"><div class="tri"></div><svg width="30" height="30" viewBox="-15 -15 30 30"><g class="s" stroke-width="1.200"><path d="M-3.600,-5.200 L0,-7.200 L3.600,-5.200 V-1.200 L0,.8 L-3.600,-1.200 Z M-3.600,-5.200 L0,-3.200 L3.600,-5.200 M0,-3.200 V.8"/><path d="M-7.600,1.600 L-4,-.4 L-.4,1.600 V5.400 L-4,7.400 L-7.600,5.400 Z M-7.600,1.600 L-4,3.600 L-.4,1.600 M-4,3.600 V7.400"/><path d="M.4,1.600 L4,-.4 L7.600,1.600 V5.400 L4,7.400 L.4,5.400 Z M.4,1.600 L4,3.600 L7.600,1.600 M4,3.600 V7.400"/></g></svg><div class="lbl">Voxel</div></div>
<div class="bi" style="left:281.500px"><div class="tri"></div><svg width="30" height="30" viewBox="-15 -15 30 30"><g class="s" stroke-width="1.300"><path d="M-5.400,-5.400 H5.400 L8,5.800 H-8 Z"/><path d="M0,-5.400 V5.800 M-6.600,-.6 H6.600"/></g></svg><div class="lbl">Grid</div></div>
<div class="bi" style="left:328.500px"><div class="tri"></div><svg width="30" height="30" viewBox="-15 -15 30 30"><g class="s" stroke-width="1.100"><path d="M-4.400,-7 H4.400 L8.600,0 L4.400,7 H-4.400 L-8.600,0 Z"/><path d="M-8.600,0 H8.600 M-4.400,-7 L0,0 L4.400,-7 M-4.400,7 L0,0 L4.400,7 M-4.400,-7 V7 M4.400,-7 V7 M-8.600,0 L-4.400,-3 M-8.600,0 L-4.400,3"/></g></svg><div class="lbl">Wireframe</div></div>
<div class="bi" style="left:375.500px"><div class="tri"></div><svg width="30" height="30" viewBox="-15 -15 30 30"><g class="s" stroke-width="1.300"><circle cx="1.400" cy="-1.400" r="6"/><path d="M-3,3 L-7.400,7.600"/><path d="M-3,-1.400 C-1,-4.400 3.800,-4.400 5.800,-1.400 C3.800,1.200 -1,1.200 -3,-1.400 Z" stroke-width="1.100"/></g><circle cx="1.400" cy="-1.400" r="1.500" fill="#f2f2f2"/></svg><div class="lbl">Inspector</div></div>
<div class="bi" style="left:422.500px"><svg width="18" height="18" viewBox="-9 -9 18 18"><defs><linearGradient id="fgg" x1="0" y1="0" x2="1" y2="1"><stop offset="0" stop-color="#c2c2c2"/><stop offset=".45" stop-color="#a8a8a8"/><stop offset="1" stop-color="#7e7e7e"/></linearGradient><filter id="fgb"><feGaussianBlur stdDeviation=".5"/></filter></defs><rect x="-7" y="-7" width="14" height="14" rx="1.200" fill="url(#fgg)" filter="url(#fgb)"/><path d="M-7,-3 C-2,-3.600 0,-1 1.600,.4 C3.400,1.600 5.400,1.400 7,1.400 V7 H-7 Z" fill="#8a8a8a" fill-opacity=".55" filter="url(#fgb)"/></svg><div class="lbl" style="font-size:8.400px">Face Group</div></div>
</div>

<div class="panel rs">
<svg width="0" height="0" style="position:absolute"><defs>
<radialGradient id="sph" cx=".4" cy=".48" r=".62"><stop offset="0" stop-color="#fff"/><stop offset=".5" stop-color="#f6f6f6"/><stop offset=".78" stop-color="#c4c4c4"/><stop offset=".93" stop-color="#7a7a7a"/><stop offset="1" stop-color="#4c4c4c"/></radialGradient>
<radialGradient id="sphR" cx=".42" cy=".55" r=".6"><stop offset="0" stop-color="#d0d0d0"/><stop offset=".55" stop-color="#e4e4e4"/><stop offset=".8" stop-color="#bdbdbd"/><stop offset=".95" stop-color="#7c7c7c"/><stop offset="1" stop-color="#555"/></radialGradient>
<radialGradient id="sphP" cx=".42" cy=".55" r=".6"><stop offset="0" stop-color="#e8d8c0"/><stop offset=".55" stop-color="#e6e0d8"/><stop offset=".8" stop-color="#b8c4d0"/><stop offset=".95" stop-color="#7c8088"/><stop offset="1" stop-color="#555"/></radialGradient>
<filter id="sb" x="-20%" y="-20%" width="140%" height="140%"><feGaussianBlur stdDeviation=".45"/></filter>
<filter id="sb2" x="-20%" y="-20%" width="140%" height="140%"><feGaussianBlur stdDeviation=".7"/></filter>
<filter id="rough" x="-20%" y="-20%" width="140%" height="140%"><feTurbulence type="fractalNoise" baseFrequency=".35" numOctaves="2" seed="4" result="n"/><feDisplacementMap in="SourceGraphic" in2="n" scale="3.500"/></filter>
<filter id="speck" x="-20%" y="-20%" width="140%" height="140%"><feTurbulence type="fractalNoise" baseFrequency=".42" numOctaves="2" seed="11" result="n"/><feColorMatrix in="n" type="matrix" values="0 0 0 0 .5  0 0 0 0 .5  0 0 0 0 .5  0 0 0 -7 3.25" result="sp"/><feComposite in="sp" in2="SourceGraphic" operator="in" result="spc"/><feMerge><feMergeNode in="SourceGraphic"/><feMergeNode in="spc"/></feMerge></filter>
<clipPath id="sc"><circle r="11.400"/></clipPath>
</defs></svg>
<div class="tool" style="top:-2px;"><svg width="28" height="28" viewBox="-14 -14 28 28"><circle r="11.400" fill="url(#sphR)" filter="url(#sb)"/><path d="M-7.400,-2 C-7.800,-5.600 -4,-8.400 .6,-8.600 C5.200,-8.600 8.600,-6 8.400,-2 C8,2.200 4,4.600 -.2,4.400 C-4.200,4.200 -7,1.400 -7.400,-2 Z" fill="#6c6c6c" filter="url(#sb2)"/><path d="M-3,-5.600 C-1,-7.800 2,-8 4.200,-7.400 L3.600,-3.400 C1.600,-4.600 -1,-4.800 -3,-5.600 Z" fill="#fff" fill-opacity=".92" filter="url(#sb)"/></svg><div class="lbl" style="color:#e8e8e8">Clay</div></div>
<div class="tool" style="top:58px;"><svg width="28" height="28" viewBox="-14 -14 28 28"><circle r="11.400" fill="url(#sphR)" filter="url(#sb)"/><path d="M-6.400,-1.200 C-7,-4.400 -3,-5.400 0,-4.600 C2,-6.600 6.600,-7.400 7.200,-3.400 C7.600,.8 3.600,4 -.6,3.600 C-4,3.200 -6,1 -6.400,-1.200 Z" fill="#6c6c6c" filter="url(#sb2)"/><path d="M-.4,-6.400 C1.600,-8 4.400,-8 5.600,-6.600 L4,-3.600 C2.600,-4.600 1,-5 -.4,-6.400 Z" fill="#fff" fill-opacity=".92" filter="url(#sb)"/></svg><div class="lbl" style="color:#e8e8e8">Brush</div></div>
<div class="tool" style="top:118px;"><svg width="28" height="28" viewBox="-14 -14 28 28"><circle r="11.400" fill="url(#sph)" filter="url(#sb)"/><circle cx="4.600" cy="-5.600" r="4.800" fill="#777" filter="url(#sb2)"/><circle cx="6" cy="-7" r="2.600" fill="#8a8a8a" filter="url(#sb2)"/></svg><div class="lbl" style="color:#a9a3dc">Move</div></div>
<div class="tool" style="top:178px;"><svg width="28" height="28" viewBox="-14 -14 28 28"><circle r="11.400" fill="url(#sph)" filter="url(#sb)"/><ellipse cx="6.600" cy="-6.200" rx="2.800" ry="5" transform="rotate(40 6.600 -6.200)" fill="#7a7a7a" filter="url(#sb2)"/></svg><div class="lbl" style="color:#9790cc">Drag</div></div>
<div class="tool" style="top:238px;"><svg width="28" height="28" viewBox="-14 -14 28 28"><g filter="url(#sb)"><g filter="url(#speck)"><circle cx="1.200" cy="1.200" r="10.600" fill="#fbfbfb" filter="url(#rough)"/></g></g><g fill="none" stroke="#a8a8a8" stroke-width=".8" filter="url(#sb)" stroke-opacity=".8"><path d="M-7,-5 C-5,-8 -1,-9 2,-8 M5,-6 C8,-3 8,2 6,5 M-8,2 C-7,6 -3,8 1,8 M3,2 L6,-2"/></g></svg><div class="lbl" style="color:#e8e8e8">Smooth</div></div>
<div class="tool" style="top:298px;"><svg width="28" height="28" viewBox="-14 -14 28 28"><g fill="none" stroke="#9a816a" stroke-width="1.300" stroke-linejoin="round" stroke-linecap="round"><path d="M0,-9.400 C-3,-8.400 -5.800,-8 -8.400,-8 V-1.400 C-8.400,3.600 -4.600,7.200 0,9.200 C4.600,7.200 8.400,3.600 8.400,-1.400 V-8 C5.800,-8 3,-8.400 0,-9.400 Z"/><path d="M-3.800,3.600 L-2.800,.8 L2.800,-4.800 C3.800,-5.600 5,-4.400 4.200,-3.400 L-1.400,2.200 Z M-2.800,.8 L-1.400,2.200" stroke-width="1.100"/></g></svg><div class="lbl" style="color:#907a68">Mask</div></div>
<div class="tool" style="top:358px;"><svg width="28" height="28" viewBox="-14 -14 28 28"><g fill="none" stroke="#86715f" stroke-width="1.300" stroke-linejoin="round" stroke-linecap="round"><path d="M0,-9.400 C-3,-8.400 -5.800,-8 -8.400,-8 V-1.400 C-8.400,3.600 -4.600,7.200 0,9.200 C4.600,7.200 8.400,3.600 8.400,-1.400 V-8 C5.800,-8 3,-8.400 0,-9.400 Z"/><path d="M-3.600,-1 C-6,-3.600 -1.600,-5.600 1.600,-5 C5.400,-4.400 5.400,-1 1.600,-.4 C-.4,-.2 -2.400,-.2 -3.600,-1 C-4.400,0 -3,1.200 -1.600,.6 C-.6,1.600 -1,3 -2,3.800" stroke-width="1.100"/></g></svg><div class="lbl" style="color:#7f6c5d">SelMask</div></div>
<div class="tool" style="top:418px;"><svg width="28" height="28" viewBox="-14 -14 28 28"><circle r="11.400" fill="url(#sphP)" filter="url(#sb)"/><path d="M-7.400,-2 C-7.800,-5.600 -4,-8.400 .6,-8.600 C5.200,-8.600 8.600,-6 8.400,-2 C8,2.200 4,4.600 -.2,4.400 C-4.200,4.200 -7,1.400 -7.400,-2 Z" fill="#f0922c" filter="url(#sb2)"/><path d="M-3,-5.600 C-1,-7.800 2,-8 4.200,-7.400 L3.600,-3.600 C1.600,-4.800 -1,-4.800 -3,-5.600 Z" fill="#fff" fill-opacity=".9" filter="url(#sb)"/></svg><div class="lbl" style="color:#e6deb0">Paint</div></div>
<div class="tool" style="top:478px;"><svg width="28" height="28" viewBox="-14 -14 28 28"><path d="M-1.400,-8.600 C.6,-9 3.400,-8 4.600,-6.400 C6.200,-4.200 6.600,-1.600 8.600,1.600 L6,2.200 L2.800,-1 L-5.400,6 C-6.400,6.800 -7.600,5.600 -6.800,4.600 L-3,.6 L-5.400,1.200 L-5,-1 L-7,-.6 L-6.600,-2.800 L-8.200,-3.200 C-6.600,-5.600 -4,-8 -1.400,-8.600 Z" fill="none" stroke="#eee68a" stroke-width="1.300" stroke-linejoin="round"/></svg><div class="lbl" style="color:#e2daa2">Smudge</div></div>
<div class="tool" style="top:538px;"><svg width="28" height="28" viewBox="-14 -14 28 28"><circle r="11.400" fill="url(#sph)" filter="url(#sb)"/><g clip-path="url(#sc)"><ellipse cx="5" cy="-3.400" rx="6.200" ry="8.600" transform="rotate(-32 5 -3.400)" fill="#5a5a5a" filter="url(#sb2)"/><ellipse cx="6" cy="-4.200" rx="4.600" ry="7" transform="rotate(-32 6 -4.200)" fill="#484848" filter="url(#sb2)"/></g></svg><div class="lbl" style="color:#8cc468">Flatten</div></div>
<div class="tool" style="top:598px;background:#4b6637;"><svg width="28" height="28" viewBox="-14 -14 28 28"><circle r="11.400" fill="url(#sph)" filter="url(#sb)"/><g clip-path="url(#sc)"><ellipse cx="5" cy="-3.400" rx="6.200" ry="8.600" transform="rotate(-32 5 -3.400)" fill="#3c3c42" filter="url(#sb2)"/></g></svg><div class="lbl" style="color:#90d45f">Planar</div></div>
<div class="tool" style="top:658px;"><svg width="28" height="28" viewBox="-14 -14 28 28"><circle r="11.400" fill="url(#sph)" filter="url(#sb)"/><path d="M-6,-1 C-3,2 3.600,2.400 5.400,-.6 C6,-1.800 6,-3.600 5.600,-5" fill="none" stroke="#454545" stroke-width="1.700" stroke-linecap="round" filter="url(#sb)"/></svg><div class="lbl" style="color:#e8aa9c">Crease</div></div>
<div class="tool" style="top:718px;"><svg width="28" height="28" viewBox="-14 -14 28 28"><circle r="11.400" fill="url(#sph)" filter="url(#sb)"/><path d="M-4,-3.800 C-1.600,-1.400 3.600,-1.200 5,-3.600 C5.400,-4.600 5.400,-5.800 5,-6.800" fill="none" stroke="#454545" stroke-width="1.500" stroke-linecap="round" filter="url(#sb)"/></svg><div class="lbl" style="color:#e8aa8a">Pinch</div></div>
<div class="tool" style="top:778px;"><svg width="28" height="28" viewBox="-14 -14 28 28"><g fill="none" stroke="#ea8a8a" stroke-width="1.300" stroke-linecap="round"><path d="M-7.200,-7.600 L8,6.400"/><path d="M-4.200,-4.800 C-8.600,1.600 -3.600,8.400 3,7.400 C5,7.200 6.600,6.600 8,6.400"/></g></svg><div class="lbl" style="color:#e27474">Trim</div></div>
<div style="position:absolute;left:0;right:0;bottom:0;height:20px;background:linear-gradient(to bottom,rgba(150,60,60,0),rgba(150,62,62,.4) 75%,rgba(160,70,70,.55))"></div>
</div>
<svg style="position:absolute;left:1205px;top:850px" width="75" height="60" viewBox="1205 850 75 60"><path d="M1217,868 V878 C1217,886 1222,890.500 1230,890.500" fill="none" stroke="#363636" stroke-width="3.400" stroke-linecap="round"/><g fill="#363636"><circle cx="1217" cy="859" r="1.700"/><circle cx="1217" cy="863.500" r="1.700"/><circle cx="1235" cy="890.500" r="1.700"/><circle cx="1240" cy="890.500" r="1.700"/><circle cx="1245" cy="890.500" r="1.700"/><circle cx="1249.500" cy="890.500" r="1.700"/></g><rect x="1245" y="894.200" width="22" height="2.800" rx="1" fill="#6c6c6c"/></svg>
<div style="position:absolute;left:1226px;top:900px;width:60px;text-align:center;font-size:13px;line-height:15.500px;color:#8c8c8c">2.8<br>iPad</div>

<div class="panel lp" style="top:83px;height:56px;background:#3a3335">
<svg style="position:absolute;left:12.800px;top:10.800px" width="22" height="20" viewBox="-11 -10 22 20"><path d="M-.8,-6.200 V5.800 H-7 Z" fill="none" stroke="#cf5662" stroke-width="1.300" stroke-linejoin="round"/><path d="M1,-6.200 V5.800 H7 Z" fill="#d2505e" stroke="#d2505e" stroke-width="1.300" stroke-linejoin="round"/></svg>
<div style="position:absolute;left:30.500px;top:3.500px;font-size:9.500px;line-height:10px;letter-spacing:-.6px;white-space:nowrap"><span style="color:#7f93b4">L</span><span style="color:#b55560">/W</span></div>
<div style="position:absolute;left:42px;top:15px;font-size:5px;line-height:6px;color:#8a8088">&#9656;</div>
<div class="lbl" style="top:36px;color:#a95a63">Sym</div>
</div>
<div class="panel lp" style="top:144px;height:299.500px">
<div style="position:absolute;left:5px;top:1px;width:37px;height:147px;background:#3d3c3d;border-radius:6px 6px 5px 5px"></div>
<div style="position:absolute;left:5px;top:110px;width:37px;height:38px;background:#b04f53;border-radius:5px"></div>
<svg style="position:absolute;left:13px;top:63.500px" width="20" height="20" viewBox="-10 -10 20 20"><circle r="7.400" fill="none" stroke="#a9a9a9" stroke-width="1"/><circle r="1.500" fill="#a9a9a9"/></svg>
<div style="position:absolute;left:5px;top:152px;width:37px;height:145px;background:#3d3c3d;border-radius:6px"></div>
<div style="position:absolute;left:5px;top:175px;width:37px;height:122px;background:#b04f53;border-radius:5px"></div>
<svg style="position:absolute;left:15px;top:214px" width="16" height="20" viewBox="-8 -10 16 20"><path d="M1.600,-7 L-3.400,1 H.2 L-1.600,7 L3.600,-1.400 H0 Z" fill="none" stroke="#eaa6a6" stroke-width=".9" stroke-linejoin="round"/></svg>
</div>
<div class="panel lp" style="top:474.500px;height:56px">
<svg style="position:absolute;left:13px;top:10.500px" width="20" height="20" viewBox="-10 -10 20 20"><path class="s" d="M-6,-6.800 H6 M0,6.600 V-3 M-4.400,1.200 L0,-3.200 L4.400,1.200" stroke-width="1.500"/></svg>
<div class="lbl" style="top:36px">Fill</div>
</div>
<div class="panel lp" style="top:535.500px;height:224px">
<div class="ltool" style="top:0px"><svg width="28" height="28" viewBox="-14 -14 28 28"><g filter="url(#sb)"><g filter="url(#speck)"><circle cx="1.200" cy="1.200" r="10.600" fill="#fbfbfb" filter="url(#rough)"/></g></g><g fill="none" stroke="#a8a8a8" stroke-width=".8" filter="url(#sb)" stroke-opacity=".8"><path d="M-7,-5 C-5,-8 -1,-9 2,-8 M5,-6 C8,-3 8,2 6,5 M-8,2 C-7,6 -3,8 1,8 M3,2 L6,-2"/></g></svg><div class="lbl" style="color:#e8e8e8">Smooth</div></div>
<div class="ltool" style="top:56px"><svg width="28" height="28" viewBox="-14 -14 28 28"><g fill="none" stroke="#9a816a" stroke-width="1.300" stroke-linejoin="round" stroke-linecap="round"><path d="M0,-9.400 C-3,-8.400 -5.800,-8 -8.400,-8 V-1.400 C-8.400,3.600 -4.600,7.200 0,9.200 C4.600,7.200 8.400,3.600 8.400,-1.400 V-8 C5.800,-8 3,-8.400 0,-9.400 Z"/><path d="M-3.800,3.600 L-2.800,.8 L2.800,-4.800 C3.800,-5.600 5,-4.400 4.200,-3.400 L-1.400,2.200 Z M-2.800,.8 L-1.400,2.200" stroke-width="1.100"/></g></svg><div class="lbl" style="color:#907a68">Mask</div></div>
<div class="ltool" style="top:112px"><svg width="28" height="28" viewBox="-14 -14 28 28"><g fill="#dfe8f4"><rect x="-8.00" y="-8.00" width="1.200" height="1.200"/><rect x="-6.15" y="-8.00" width="1.200" height="1.200"/><rect x="-4.30" y="-8.00" width="1.200" height="1.200"/><rect x="-2.45" y="-8.00" width="1.200" height="1.200"/><rect x="-0.60" y="-8.00" width="1.200" height="1.200"/><rect x="1.25" y="-8.00" width="1.200" height="1.200"/><rect x="3.10" y="-8.00" width="1.200" height="1.200"/><rect x="4.95" y="-8.00" width="1.200" height="1.200"/><rect x="6.80" y="-8.00" width="1.200" height="1.200"/><rect x="-9.85" y="-6.15" width="1.200" height="1.200"/><rect x="-8.00" y="-6.15" width="1.200" height="1.200"/><rect x="-6.15" y="-6.15" width="1.200" height="1.200"/><rect x="-4.30" y="-6.15" width="1.200" height="1.200"/><rect x="3.10" y="-6.15" width="1.200" height="1.200"/><rect x="4.95" y="-6.15" width="1.200" height="1.200"/><rect x="6.80" y="-6.15" width="1.200" height="1.200"/><rect x="8.65" y="-6.15" width="1.200" height="1.200"/><rect x="-11.70" y="-4.30" width="1.200" height="1.200"/><rect x="-9.85" y="-4.30" width="1.200" height="1.200"/><rect x="-8.00" y="-4.30" width="1.200" height="1.200"/><rect x="-6.15" y="-4.30" width="1.200" height="1.200"/><rect x="-2.45" y="-4.30" width="1.200" height="1.200"/><rect x="-0.60" y="-4.30" width="1.200" height="1.200"/><rect x="1.25" y="-4.30" width="1.200" height="1.200"/><rect x="4.95" y="-4.30" width="1.200" height="1.200"/><rect x="6.80" y="-4.30" width="1.200" height="1.200"/><rect x="8.65" y="-4.30" width="1.200" height="1.200"/><rect x="10.50" y="-4.30" width="1.200" height="1.200"/><rect x="-11.70" y="-2.45" width="1.200" height="1.200"/><rect x="-9.85" y="-2.45" width="1.200" height="1.200"/><rect x="-8.00" y="-2.45" width="1.200" height="1.200"/><rect x="-4.30" y="-2.45" width="1.200" height="1.200"/><rect x="-2.45" y="-2.45" width="1.200" height="1.200"/><rect x="-0.60" y="-2.45" width="1.200" height="1.200"/><rect x="1.25" y="-2.45" width="1.200" height="1.200"/><rect x="3.10" y="-2.45" width="1.200" height="1.200"/><rect x="6.80" y="-2.45" width="1.200" height="1.200"/><rect x="8.65" y="-2.45" width="1.200" height="1.200"/><rect x="10.50" y="-2.45" width="1.200" height="1.200"/><rect x="-11.70" y="-0.60" width="1.200" height="1.200"/><rect x="-9.85" y="-0.60" width="1.200" height="1.200"/><rect x="-8.00" y="-0.60" width="1.200" height="1.200"/><rect x="-4.30" y="-0.60" width="1.200" height="1.200"/><rect x="-2.45" y="-0.60" width="1.200" height="1.200"/><rect x="1.25" y="-0.60" width="1.200" height="1.200"/><rect x="3.10" y="-0.60" width="1.200" height="1.200"/><rect x="6.80" y="-0.60" width="1.200" height="1.200"/><rect x="8.65" y="-0.60" width="1.200" height="1.200"/><rect x="10.50" y="-0.60" width="1.200" height="1.200"/><rect x="-11.70" y="1.25" width="1.200" height="1.200"/><rect x="-9.85" y="1.25" width="1.200" height="1.200"/><rect x="-8.00" y="1.25" width="1.200" height="1.200"/><rect x="-4.30" y="1.25" width="1.200" height="1.200"/><rect x="-2.45" y="1.25" width="1.200" height="1.200"/><rect x="-0.60" y="1.25" width="1.200" height="1.200"/><rect x="1.25" y="1.25" width="1.200" height="1.200"/><rect x="3.10" y="1.25" width="1.200" height="1.200"/><rect x="6.80" y="1.25" width="1.200" height="1.200"/><rect x="8.65" y="1.25" width="1.200" height="1.200"/><rect x="10.50" y="1.25" width="1.200" height="1.200"/><rect x="-11.70" y="3.10" width="1.200" height="1.200"/><rect x="-9.85" y="3.10" width="1.200" height="1.200"/><rect x="-8.00" y="3.10" width="1.200" height="1.200"/><rect x="-6.15" y="3.10" width="1.200" height="1.200"/><rect x="-2.45" y="3.10" width="1.200" height="1.200"/><rect x="-0.60" y="3.10" width="1.200" height="1.200"/><rect x="1.25" y="3.10" width="1.200" height="1.200"/><rect x="4.95" y="3.10" width="1.200" height="1.200"/><rect x="6.80" y="3.10" width="1.200" height="1.200"/><rect x="8.65" y="3.10" width="1.200" height="1.200"/><rect x="10.50" y="3.10" width="1.200" height="1.200"/><rect x="-9.85" y="4.95" width="1.200" height="1.200"/><rect x="-8.00" y="4.95" width="1.200" height="1.200"/><rect x="-6.15" y="4.95" width="1.200" height="1.200"/><rect x="-4.30" y="4.95" width="1.200" height="1.200"/><rect x="3.10" y="4.95" width="1.200" height="1.200"/><rect x="4.95" y="4.95" width="1.200" height="1.200"/><rect x="6.80" y="4.95" width="1.200" height="1.200"/><rect x="8.65" y="4.95" width="1.200" height="1.200"/><rect x="-8.00" y="6.80" width="1.200" height="1.200"/><rect x="-6.15" y="6.80" width="1.200" height="1.200"/><rect x="-4.30" y="6.80" width="1.200" height="1.200"/><rect x="-2.45" y="6.80" width="1.200" height="1.200"/><rect x="-0.60" y="6.80" width="1.200" height="1.200"/><rect x="1.25" y="6.80" width="1.200" height="1.200"/><rect x="3.10" y="6.80" width="1.200" height="1.200"/><rect x="4.95" y="6.80" width="1.200" height="1.200"/><rect x="6.80" y="6.80" width="1.200" height="1.200"/><rect x="-11.700" y="-10.400" width="1.200" height="1.200"/><rect x="-9.800" y="-8.600" width="1.200" height="1.200" fill-opacity=".6"/><rect x="8.600" y="7.400" width="1.200" height="1.200"/><rect x="10.500" y="9.300" width="1.200" height="1.200"/></g></svg><div class="lbl" style="color:#a9c9ea">Hide</div></div>
<div class="ltool" style="top:168px"><svg width="28" height="28" viewBox="-14 -14 28 28"><g fill="none" stroke-width="1.100" stroke-linecap="round"><circle r="10.600" stroke="#cf6238" stroke-width="1.200"/><path d="M0,-9 V2" stroke="#5fb060"/><path d="M-7,1 C-6,-4 -3,-6.500 0,-6.500 C3.400,-6.500 6.400,-3.600 7,.6" stroke="#5a78c8"/><path d="M-7.400,2.400 C-4,6.600 4,6.600 7.600,2" stroke="#d05a4a"/><path d="M-5.600,3.600 C-2,5 3,4.600 6,2.600" stroke="#5fa86a"/><path d="M-6,1.600 C-3,3.400 2,3.400 5.400,1.200" stroke="#4a6ac0"/></g><circle cx="0" cy="-9" r="1" fill="#8fd080"/></svg><div class="lbl" style="color:#e2c4dc">Gizmo</div></div>
</div>
<div class="panel lp" style="top:765px;height:112px">
<div style="position:absolute;left:8px;top:12px;width:32px;height:32px;border-radius:6px;background:radial-gradient(circle at 50% 50%,#3e3329,#332d2a 70%,#2f2d2c)"></div>
<svg style="position:absolute;left:0;top:0" width="46" height="112"><path d="M5.500,46 L41,10.500" stroke="#f0484c" stroke-width="1.600" stroke-linecap="round"/><rect x="4" y="66" width="38" height="38" fill="#fff"/><path d="M6,102 L41,67" stroke="#f0484c" stroke-width="1.600" stroke-linecap="round"/></svg>
<div style="position:absolute;left:42.500px;top:81px;font-size:4.500px;line-height:6px;color:#999">&#9656;</div>
</div>

<div style="position:absolute;left:158px;top:59px;width:200px;color:#8e8e8e;font-size:10.800px;line-height:11.500px;white-space:nowrap">
<div style="position:absolute;left:.8px;top:3.300px;width:45.500px;height:6.500px;background:#373737;border-radius:2px"></div>
<div style="position:absolute;left:1.300px;top:4.200px;width:2.800px;height:4.800px;background:#d0d0d0;border-radius:1.200px"></div>
<div style="position:absolute;left:56px;top:1.900px;letter-spacing:-.05px">491 MB / 7.81 GB</div>
<div style="position:absolute;left:0;top:12.700px;letter-spacing:.05px">Scene vertices<span style="font-family:'Liberation Sans','Noto Sans CJK SC',sans-serif;margin-right:-2px">&#65306;</span>494k</div>
<div style="position:absolute;left:0;top:29px;width:136px;height:1px;background:#585858"></div>
<svg style="position:absolute;left:0;top:37px" width="12" height="9" viewBox="-9.500 -6 19 12.500"><path d="M-9.200,6.300 L-8.600,3.600 Q-8.200,2.300 -6.800,2.300 L-6.200,2.300 L-5.600,-.4 Q-5.200,-1.700 -3.800,-1.700 L-3.200,-1.700 L-2.600,-4.400 Q-2.200,-5.700 -.8,-5.700 L.8,-5.700 Q2.200,-5.700 2.600,-4.400 L3.200,-1.700 L3.800,-1.700 Q5.200,-1.700 5.600,-.4 L6.200,2.300 L6.800,2.300 Q8.200,2.300 8.600,3.600 L9.200,6.300 Z" fill="#f4f4f4"/><g fill="#262626"><path d="M-1.600,-2.400 Q-1.400,-4 0,-4 Q1.400,-4 1.600,-2.400 Z"/><path d="M-4.600,1.600 Q-4.400,0 -3,0 Q-1.600,0 -1.400,1.600 Z"/><path d="M1.400,1.600 Q1.600,0 3,0 Q4.400,0 4.600,1.600 Z"/><path d="M-7.600,5.400 Q-7.400,3.800 -6,3.800 Q-4.600,3.800 -4.400,5.400 Z"/><path d="M-1.600,5.400 Q-1.400,3.800 0,3.800 Q1.400,3.800 1.600,5.400 Z"/><path d="M4.400,5.400 Q4.600,3.800 6,3.800 Q7.400,3.800 7.600,5.400 Z"/></g></svg>
<div style="position:absolute;left:14.500px;top:36px"><span style="color:#ececec">Cylinder</span> <span style="font-weight:bold">&middot;</span> 4610 <span style="font-weight:bold">&middot;</span></div>
<svg style="position:absolute;left:98px;top:37px" width="10" height="10" viewBox="0 0 10 10"><g fill="#a8a8a8"><rect x="0" y="0" width="2" height="2"/><rect x="4" y="0" width="2" height="2"/><rect x="8" y="0" width="2" height="2"/><rect x="2" y="2" width="2" height="2"/><rect x="6" y="2" width="2" height="2"/><rect x="0" y="4" width="2" height="2"/><rect x="4" y="4" width="2" height="2"/><rect x="8" y="4" width="2" height="2"/><rect x="2" y="6" width="2" height="2"/><rect x="6" y="6" width="2" height="2"/><rect x="0" y="8" width="2" height="2"/><rect x="4" y="8" width="2" height="2"/><rect x="8" y="8" width="2" height="2"/></g><g fill="#5c5c5c"><rect x="2" y="0" width="2" height="2"/><rect x="6" y="0" width="2" height="2"/><rect x="0" y="2" width="2" height="2"/><rect x="4" y="2" width="2" height="2"/><rect x="8" y="2" width="2" height="2"/><rect x="2" y="4" width="2" height="2"/><rect x="6" y="4" width="2" height="2"/><rect x="0" y="6" width="2" height="2"/><rect x="4" y="6" width="2" height="2"/><rect x="8" y="6" width="2" height="2"/><rect x="2" y="8" width="2" height="2"/><rect x="6" y="8" width="2" height="2"/></g></svg>
</div>


</body>
</html>
